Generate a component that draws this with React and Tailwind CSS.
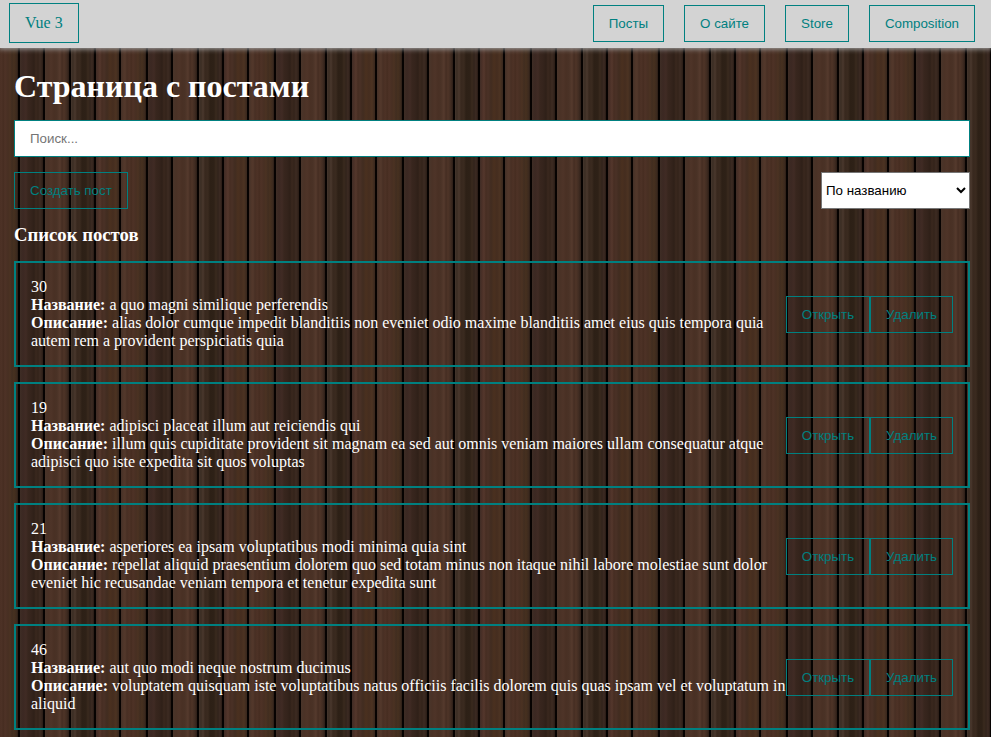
import React from "react";

const posts = [
  { id: 30, title: "a quo magni similique perferendis", body: "alias dolor cumque impedit blanditiis non eveniet odio maxime blanditiis amet eius quis tempora quia autem rem a provident perspiciatis quia" },
  { id: 19, title: "adipisci placeat illum aut reiciendis qui", body: "illum quis cupiditate provident sit magnam ea sed aut omnis veniam maiores ullam consequatur atque adipisci quo iste expedita sit quos voluptas" },
  { id: 21, title: "asperiores ea ipsam voluptatibus modi minima quia sint", body: "repellat aliquid praesentium dolorem quo sed totam minus non itaque nihil labore molestiae sunt dolor eveniet hic recusandae veniam tempora et tenetur expedita sunt" },
  { id: 46, title: "aut quo modi neque nostrum ducimus", body: "voluptatem quisquam iste voluptatibus natus officiis facilis dolorem quis quas ipsam vel et voluptatum in aliquid" },
];

function Button({ children }) {
  return (
    <button className="h-[37px] shrink-0 whitespace-nowrap border border-[#008080] px-[15px] font-['Liberation_Sans',sans-serif] text-[13.333px] leading-[15px] text-[#008080]">
      {children}
    </button>
  );
}

function Post({ post }) {
  return (
    <div className="mt-[15px] flex h-[106px] items-center justify-between border-2 border-[#008080] p-[15px]">
      <div className="text-[16px] leading-[18px]">
        <div>{post.id}</div>
        <div><strong>Название:</strong> {post.title}</div>
        <div><strong>Описание:</strong> {post.body}</div>
      </div>
      <div className="flex">
        <Button>Открыть</Button>
        <Button>Удалить</Button>
      </div>
    </div>
  );
}

export default function App() {
  return (
    <div className="h-[737px] overflow-hidden bg-[linear-gradient(90deg,#4b3024_0,#4d3226_2px,#452c20_3px,#4e3226_5px,#472f22_8px,#4b3222_10px,#412d20_12px,#46301f_14px,#3b291e_17px,#281b14_18px,#060201_18px,#060201_20px,#3e2d25_20px,#3b2822_23px,#402b24_26px,#38261e_28px,#35241c_31px,#2f2018_34px,#3a281e_36px,#33231a_38px,#3d2b22_40px,#32231b_42px,#281b14_43px,#060201_43px,#060201_45px,#49352a_45px,#4a3226_48px,#4e3428_51px,#493024_54px,#4a3226_57px,#553a2d_60px,#452d22_62px,#4e3427_64px,#3f2b21_67px,#2c1e17_69px,#060201_69px,#060201_71px,#44362d_71px,#3b2d23_73px,#4a382d_75px,#38281e_77px,#3a2a1f_80px,#2d2016_82px,#2e2117_86px,#3a2a1e_88px,#31231b_90px,#3d2b23_92px,#281b15_94px,#060201_94px,#060201_96px,#402d26_96px,#4a3027_98px,#54372c_100px,#462d22_102px,#4a3126_104px,#412c20_107px,#4a301f_110px,#452d1f_113px,#4c3322_116px,#38271d_119px,#060201_119.5px,#060201_121px,#433128_121px,#4e3529_123px,#53382b_125px,#472f24_127px,#4b3024_128px)] bg-[length:128px_100%] font-['Liberation_Serif',serif] text-white">
      <header className="flex h-12 items-center justify-between bg-[#d3d3d3] pl-[9px] pr-4 shadow-[0_0_5px_1px_#a9a9a9]">
        <div className="mb-[3px] flex h-10 items-center border border-[#008080] px-[15px] text-[16px] text-[#008080]">Vue 3</div>
        <nav className="mb-px flex gap-5">
          <Button>Посты</Button>
          <Button>О сайте</Button>
          <Button>Store</Button>
          <Button>Composition</Button>
        </nav>
      </header>
      <main className="pl-[14px] pr-[21px] pt-5">
        <h1 className="text-[32px] font-bold leading-[37px]">Страница с постами</h1>
        <input placeholder="Поиск..." className="mt-[15px] block h-[37px] w-full border border-[#008080] bg-white px-[15px] font-['Liberation_Sans',sans-serif] text-[13.333px] placeholder:text-[#757575]" />
        <div className="mt-[15px] flex justify-between">
          <Button>Создать пост</Button>
          <select className="h-[37px] w-[149px] border border-[#767676] bg-white font-['Liberation_Sans',sans-serif] text-[13.333px] text-black">
            <option>По названию</option>
          </select>
        </div>
        <h3 className="mb-[16px] mt-[15px] text-[18.72px] font-bold leading-[21px]">Список постов</h3>
        {posts.map((p) => <Post key={p.id} post={p} />)}
      </main>
    </div>
  );
}
